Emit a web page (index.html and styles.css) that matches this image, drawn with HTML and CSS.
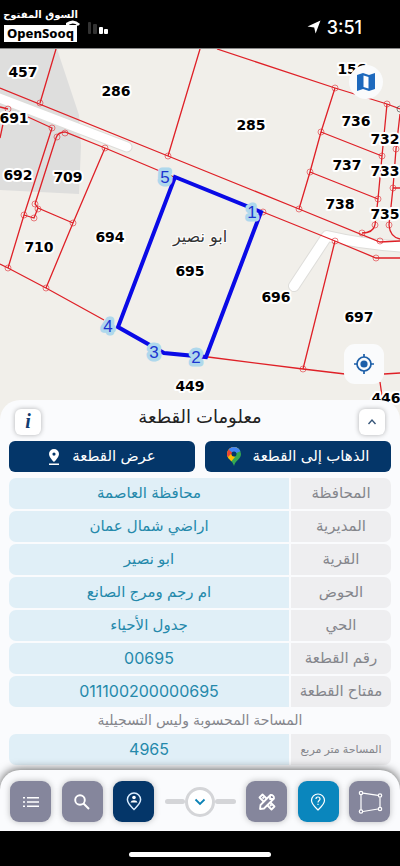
FILE: index.html
```
<!DOCTYPE html>
<html lang="ar" dir="rtl">
<head>
    <meta charset="UTF-8">
    <meta name="viewport" content="width=device-width, initial-scale=1">
    <title>معلومات القطعة</title>
    <link rel="stylesheet" href="styles.css">
</head>
<body>
    <header class="status-bar">
        <div class="clock">
            <span>3:51</span>
            <svg width="14" height="14" viewBox="0 0 14 14"><path d="M13.5 .5 8.6 13.4 7.2 7.4 .5 6.4z" fill="#fff"/></svg>
        </div>
        <svg class="signal" width="42" height="15" viewBox="0 0 42 15">
            <path d="M0 5Q7 -1 13 5" fill="none" stroke="#fff" stroke-width="3"/>
            <rect x="22" y="2" width="3" height="12" rx="1" fill="#333"/>
            <rect x="27" y="4" width="4" height="10" rx="1" fill="#333"/>
            <rect x="33" y="7" width="4" height="7" rx="1" fill="#fff"/>
            <rect x="38" y="9" width="4" height="5" rx="1" fill="#fff"/>
        </svg>
        <div class="watermark">
            <span class="watermark-ar">السوق المفتوح</span>
            <span class="watermark-en" dir="ltr">OpenSooq</span>
        </div>
    </header>

    <main class="map">
        <svg class="map-canvas" viewBox="0 0 400 372" preserveAspectRatio="xMidYMin slice" direction="ltr">
            <rect width="400" height="372" fill="#f1efea"/>
            <path d="M0 0H57L79 66 81 97 79 145 0 141z" fill="#dededd"/>

            <!-- roads -->
            <g fill="none" stroke-linecap="round" stroke-linejoin="round">
                <path d="M-6 47 127 98" stroke="#deddda" stroke-width="11"/>
                <path d="M294 237 327 187Q365 196 410 198" stroke="#deddda" stroke-width="12"/>
                <path d="M-6 47 127 98" stroke="#fff" stroke-width="9"/>
                <path d="M294 237 327 187Q365 196 410 198" stroke="#fff" stroke-width="10"/>
            </g>

            <!-- parcel borders -->
            <g fill="none" stroke="#df2027" stroke-width="1.3">
                <path d="M56 0 40 54M0 39 168 107 299 160 380 193 400 192"/>
                <path d="M200 0 168 107M217 0 335 39 387 55 400 60"/>
                <path d="M0 58 8 60M28 68 52 79 24 166 8 219M3 75 0 89"/>
                <path d="M105 99 174 128M263 163 335 192 376 209H400"/>
                <path d="M105 99 65 83Q58 83 56 89L35 155 38 159 73 174M24 166 34 169 38 159M105 99 73 174 46 239"/>
                <path d="M0 215 8 219 46 239 104 271M208 308 303 320 345 325M384 325 400 324M380 333 382 347"/>
                <path d="M335 39 321 83 310 123 299 160M321 83 382 107M310 123 378 150"/>
                <path d="M387 55 382 107 378 150 375 176M400 65 396 100 393 139 389 176M393 139H400M335 192 303 320"/>
                <path d="M375 176Q373 184 362 184M389 176Q390 188 400 190"/>
            </g>
            <g fill="none" stroke="#df2027" stroke-width=".8" opacity=".7">
                <circle cx="40" cy="54" r="3"/><circle cx="168" cy="107" r="3"/>
                <circle cx="8" cy="60" r="3"/><circle cx="52" cy="79" r="3"/>
                <circle cx="57" cy="88" r="3"/><circle cx="65" cy="84" r="3"/>
                <circle cx="105" cy="99" r="3"/><circle cx="35" cy="155" r="3"/>
                <circle cx="38" cy="160" r="3"/><circle cx="24" cy="166" r="3"/>
                <circle cx="34" cy="169" r="3"/><circle cx="73" cy="174" r="3"/>
                <circle cx="8" cy="219" r="3"/><circle cx="46" cy="239" r="3"/>
                <circle cx="335" cy="39" r="3"/><circle cx="321" cy="83" r="3"/>
                <circle cx="310" cy="123" r="3"/><circle cx="299" cy="160" r="3"/>
                <circle cx="387" cy="55" r="3"/><circle cx="382" cy="107" r="3"/>
                <circle cx="378" cy="150" r="3"/><circle cx="375" cy="176" r="3"/>
                <circle cx="389" cy="176" r="3"/><circle cx="362" cy="184" r="3"/>
                <circle cx="380" cy="192" r="3"/><circle cx="335" cy="192" r="3"/>
                <circle cx="376" cy="209" r="3"/><circle cx="303" cy="320" r="3"/>
                <circle cx="263" cy="163" r="3"/><circle cx="396" cy="100" r="3"/>
                <circle cx="393" cy="139" r="3"/><circle cx="400" cy="60" r="3" stroke="#333"/>
            </g>

            <!-- selected parcel -->
            <path d="M175 128 261 163 206 308 164 304 118 278z" fill="none" stroke="#0a0ae6" stroke-width="4"/>
            <g class="corner-labels">
                <text x="165" y="134">5</text>
                <text x="252" y="169">1</text>
                <text x="196" y="314">2</text>
                <text x="154" y="309">3</text>
                <text x="108" y="283">4</text>
            </g>

            <g class="parcel-labels">
                <text x="23" y="28">457</text>
                <text x="116" y="47">286</text>
                <text x="251" y="81">285</text>
                <text x="14" y="74">691</text>
                <text x="18" y="131">692</text>
                <text x="68" y="133">709</text>
                <text x="39" y="203">710</text>
                <text x="110" y="193">694</text>
                <text x="190" y="227">695</text>
                <text x="276" y="253">696</text>
                <text x="359" y="273">697</text>
                <text x="190" y="342">449</text>
                <text x="386" y="354">446</text>
                <text x="352" y="25">156</text>
                <text x="356" y="77">736</text>
                <text x="347" y="121">737</text>
                <text x="340" y="160">738</text>
                <text x="385" y="95">732</text>
                <text x="385" y="127">733</text>
                <text x="385" y="170">735</text>
            </g>
            <text class="village-label" x="200" y="193" direction="rtl">ابو نصير</text>
        </svg>
        <button class="map-button layers-button" aria-label="الخرائط">
            <svg width="20" height="20" viewBox="0 0 20 20">
                <path d="M1 3 7 1 13 3 19 1V17L13 19 7 17 1 19z" fill="#1d69bd"/>
                <path d="M7.5 3.5 12.5 5V16.500L7.500 15z" fill="#fff"/>
            </svg>
        </button>
        <button class="map-button locate-button" aria-label="موقعي">
            <svg width="20" height="20" viewBox="0 0 20 20" fill="none" stroke="#1d5fa8" stroke-width="1.700">
                <circle cx="10" cy="10" r="7"/>
                <circle cx="10" cy="10" r="3.600" fill="#1d5fa8" stroke="none"/>
                <path d="M10 0V3M10 17V20M0 10H3M17 10H20"/>
            </svg>
        </button>
    </main>

    <section class="sheet">
        <div class="sheet-header">
            <button class="small-button" aria-label="طي">
                <svg width="10" height="8" viewBox="0 0 10 8"><path d="M1.500 6 5 2 8.500 6" fill="none" stroke="#38577a" stroke-width="1.400"/></svg>
            </button>
            <h1>معلومات القطعة</h1>
            <button class="small-button info-button">i</button>
        </div>

        <div class="actions">
            <button class="action">
                <span>الذهاب إلى القطعة</span>
                <svg width="14" height="19" viewBox="0 0 14 19">
                    <defs><clipPath id="pin"><path d="M7 0A7 7 0 0 0 0 7C0 12 5.500 13 7 19 8.500 13 14 12 14 7A7 7 0 0 0 7 0z"/></clipPath></defs>
                    <g clip-path="url(#pin)">
                        <rect width="14" height="19" fill="#34a853"/>
                        <path d="M0 14 14 0 0 0z" fill="#fbbc04"/>
                        <path d="M0 0H5L7 7 1 11 0 10z" fill="#ea4335"/>
                        <path d="M2 0H14V4L7 7 2 3z" fill="#4285f4"/>
                        <path d="M0 11 4 7 8 10 3 16z" fill="#fbbc04"/>
                    </g>
                    <circle cx="7" cy="7" r="2.500" fill="#043669"/>
                </svg>
            </button>
            <button class="action">
                <span>عرض القطعة</span>
                <svg width="12" height="16" viewBox="0 0 12 16" fill="#fff">
                    <path fill-rule="evenodd" d="M6 0A5 5 0 0 0 1 5C1 8.500 6 13 6 13S11 8.500 11 5A5 5 0 0 0 6 0zM6 3.500A1.600 1.600 0 1 1 6 6.700 1.600 1.600 0 0 1 6 3.500z"/>
                    <rect x="1" y="14.500" width="10" height="1.500"/>
                </svg>
            </button>
        </div>

        <table class="details">
            <tr><th scope="row">المحافظة</th><td>محافظة العاصمة</td></tr>
            <tr><th scope="row">المديرية</th><td>اراضي شمال عمان</td></tr>
            <tr><th scope="row">القرية</th><td>ابو نصير</td></tr>
            <tr><th scope="row">الحوض</th><td>ام رجم ومرج الصانع</td></tr>
            <tr><th scope="row">الحي</th><td>جدول الأحياء</td></tr>
            <tr><th scope="row">رقم القطعة</th><td class="number">00695</td></tr>
            <tr><th scope="row">مفتاح القطعة</th><td class="number">011100200000695</td></tr>
            <tr class="note"><td colspan="2">المساحة المحسوبة وليس التسجيلية</td></tr>
            <tr class="area"><th scope="row">المساحة متر مربع</th><td class="number">4965</td></tr>
        </table>
    </section>

    <nav class="toolbar">
        <button class="tool" aria-label="رسم">
            <svg width="26" height="26" viewBox="0 0 26 26" fill="none" stroke="#fff" stroke-width="1.200">
                <path d="M4 5.500V21M6 4.200 21 6.300M23 8.500V18M21 20 6 22.500"/>
                <circle cx="4" cy="4" r="1.700"/><circle cx="23" cy="6.500" r="1.700"/>
                <circle cx="23" cy="20" r="1.700"/><circle cx="4" cy="22.500" r="1.700"/>
            </svg>
        </button>
        <button class="tool tool-blue" aria-label="استعلام">
            <svg width="16" height="18" viewBox="0 0 16 18" fill="none" stroke="#fff" stroke-width="1.200">
                <path d="M8 1A6.500 6.500 0 0 0 1.500 7.500C1.500 11 5 14 8 17 11 14 14.500 11 14.500 7.500A6.500 6.500 0 0 0 8 1z"/>
                <path d="M6 6Q6 4 8 4T10 6C10 7.500 8 7.500 8 9.500M8 10.800V12"/>
            </svg>
        </button>
        <button class="tool" aria-label="أدوات">
            <svg width="18" height="18" viewBox="0 0 18 18" fill="none" stroke="#fff" stroke-width="1.800" stroke-linejoin="round">
                <path d="M4.500 1.500 16.500 13.500 13.500 16.500 1.500 4.500z"/>
                <path d="M6 4 4.500 5.500M13.500 11.500 12 13"/>
                <path d="M12.500 2A3 3 0 0 1 16 5.500L6 15.500 2 16 2.500 12z" fill="#85869c"/>
                <path d="M12 3V6H15"/>
            </svg>
        </button>
        <div class="handle">
            <button class="handle-button" aria-label="إخفاء">
                <svg width="12" height="8" viewBox="0 0 12 8"><path d="M1.500 1.500 6 6 10.500 1.500" fill="none" stroke="#0b82b6" stroke-width="1.800"/></svg>
            </button>
        </div>
        <button class="tool tool-navy" aria-label="الموقع">
            <svg width="16" height="19" viewBox="0 0 16 19" fill="none" stroke="#d9ecff" stroke-width="1.500">
                <path d="M8 1A6.600 6.600 0 0 0 1.400 7.600C1.400 11.500 5 14.500 8 17.500 11 14.500 14.600 11.500 14.600 7.600A6.600 6.600 0 0 0 8 1z"/>
                <circle cx="8" cy="5.500" r="1.800" fill="#fff" stroke="none"/>
                <path d="M4.500 10.500Q5 8.200 8 8.200T11.500 10.500z" fill="#fff" stroke="none"/>
            </svg>
        </button>
        <button class="tool" aria-label="بحث">
            <svg width="16" height="16" viewBox="0 0 16 16" fill="none" stroke="#fff" stroke-width="1.900">
                <circle cx="6" cy="6" r="4.800"/><path d="M9.500 9.500 15 15"/>
            </svg>
        </button>
        <button class="tool" aria-label="القائمة">
            <svg width="16" height="12" viewBox="0 0 16 12" fill="#fff">
                <path d="M0 1H2V2.500H0zM0 5.200H2V6.700H0zM0 9.500H2V11H0zM4 1H16V2.500H4zM4 5.200H16V6.700H4zM4 9.500H16V11H4z"/>
            </svg>
        </button>
    </nav>

    <footer class="home-bar">
        <div class="home-indicator"></div>
    </footer>
</body>
</html>
```
FILE: styles.css
```
* {
    box-sizing: border-box;
}
body {
    margin: 0;
    min-height: 100vh;
    display: flex;
    flex-direction: column;
    background: #000;
    font-family: Inter, "DejaVu Sans", sans-serif;
}
button {
    display: flex;
    align-items: center;
    justify-content: center;
    padding: 0;
    border: none;
    font-family: inherit;
    cursor: pointer;
}

/* status bar */
.status-bar {
    display: flex;
    align-items: center;
    height: 48px;
    padding: 6px 38px 0 4px;
    color: #fff;
}
.clock {
    display: flex;
    align-items: center;
    gap: 6px;
    margin-left: auto;
    font-size: 18px;
    font-weight: 500;
}
/* the wifi arc runs under the watermark */
.signal {
    margin-left: -11px;
}
.watermark {
    display: flex;
    flex-direction: column;
    align-items: center;
    width: 73px;
    padding-bottom: 8px;
    z-index: 1;
}
.watermark-ar {
    font: bold 10px/20px "DejaVu Sans", sans-serif;
    white-space: nowrap;
}
.watermark-en {
    width: 100%;
    background: #fff;
    color: #000;
    text-align: center;
    font: 800 13px/17px "Noto Sans", sans-serif;
}

/* map */
.map {
    position: relative;
    flex: 1;
    min-height: 300px;
    border-top: 1px solid #888;
    background: #f1efea;
    overflow: hidden;
}
.map-canvas {
    position: absolute;
    width: 100%;
    height: 100%;
}
.parcel-labels text {
    font: bold 14px "DejaVu Sans", sans-serif;
    text-anchor: middle;
    fill: #000;
    stroke: #fff;
    stroke-width: 4px;
    stroke-linejoin: round;
    paint-order: stroke;
}
.corner-labels text {
    font: 17px "Liberation Sans", sans-serif;
    text-anchor: middle;
    fill: #1c35d0;
    stroke: #afd8ec;
    stroke-width: 7px;
    stroke-linejoin: round;
    paint-order: stroke;
}
.village-label {
    font: 16px "DejaVu Sans", sans-serif;
    text-anchor: middle;
    fill: #333;
    stroke: #fff;
    stroke-width: 2px;
    paint-order: stroke;
}
.map-button {
    position: absolute;
    background: #fafbfc;
}
.layers-button {
    top: 16px;
    right: 17px;
    width: 34px;
    height: 34px;
    border-radius: 17px;
}
.locate-button {
    bottom: 36px;
    right: 16px;
    width: 40px;
    height: 40px;
    border-radius: 11px;
}

/* info sheet */
.sheet {
    position: relative;
    margin-top: -20px;
    padding: 0 7px 23px;
    border-radius: 20px 20px 0 0;
    background: #fafbfd;
}
.sheet-header {
    display: flex;
    align-items: center;
    justify-content: space-between;
    height: 41px;
    padding: 2px 8px 0;
}
.sheet-header h1 {
    margin: 0;
    padding-bottom: 10px;
    color: #222;
    font-size: 18px;
    font-weight: normal;
}
.small-button {
    width: 26px;
    height: 26px;
    border-radius: 6px;
    background: #fff;
    box-shadow: 0 0 5px rgba(0,0,0,0.3);
}
.info-button {
    color: #123c70;
    font: italic bold 20px "Liberation Serif", serif;
}
.actions {
    display: flex;
    gap: 10px;
    padding: 0 2px;
    margin-bottom: 4px;
}
.action {
    flex: 1;
    gap: 12px;
    height: 31px;
    border-radius: 6px;
    background: #043669;
    color: #fff;
    font-size: 15px;
}
.action span {
    padding-bottom: 2px;
}
.details {
    width: 100%;
    border-spacing: 2px;
    table-layout: fixed;
    text-align: center;
    line-height: 20px;
}
.details th,
.details td {
    height: 31px;
    padding: 0 0 2px;
    font-size: 15px;
    font-weight: normal;
    white-space: nowrap;
}
.details th {
    width: 100px;
    border-radius: 0 7px 7px 0;
    background: #eeeef0;
    color: #85868c;
}
.details td {
    border-radius: 7px 0 0 7px;
    background: #e0eff7;
    color: #2589ab;
}
.details .number {
    font-size: 16px;
}
.details .note td {
    height: 23px;
    background: none;
    color: #85868c;
    font-size: 14px;
}
.details .area th {
    font-size: 11px;
}

/* bottom toolbar */
.toolbar {
    position: relative;
    display: flex;
    align-items: center;
    justify-content: space-between;
    height: 61px;
    margin-top: -20px;
    padding: 2px 10px 0;
    border-radius: 20px 20px 0 0;
    background: #fafbfd;
    box-shadow: 0 -1px 10px rgba(0,0,0,0.6);
}
.tool {
    width: 41px;
    height: 41px;
    border-radius: 9px;
    background: #85869c;
    box-shadow: 0 0 6px rgba(0,0,0,0.25);
}
.tool-blue {
    background: #0a86bd;
}
.tool-navy {
    background: #043669;
}
.handle {
    display: flex;
    align-items: center;
    width: 71px;
}
.handle::before,
.handle::after {
    content: "";
    flex: 1;
    height: 5px;
    border-radius: 3px;
    background: #d4d5d8;
}
.handle-button {
    width: 30px;
    height: 30px;
    border: 3px solid #d4d5d8;
    border-radius: 50%;
    background: #fff;
}

.home-bar {
    position: relative;
    display: flex;
    justify-content: center;
    height: 35px;
    padding-top: 21px;
    background: #000;
}
.home-indicator {
    width: 142px;
    height: 5px;
    border-radius: 3px;
    background: #fff;
}
```
